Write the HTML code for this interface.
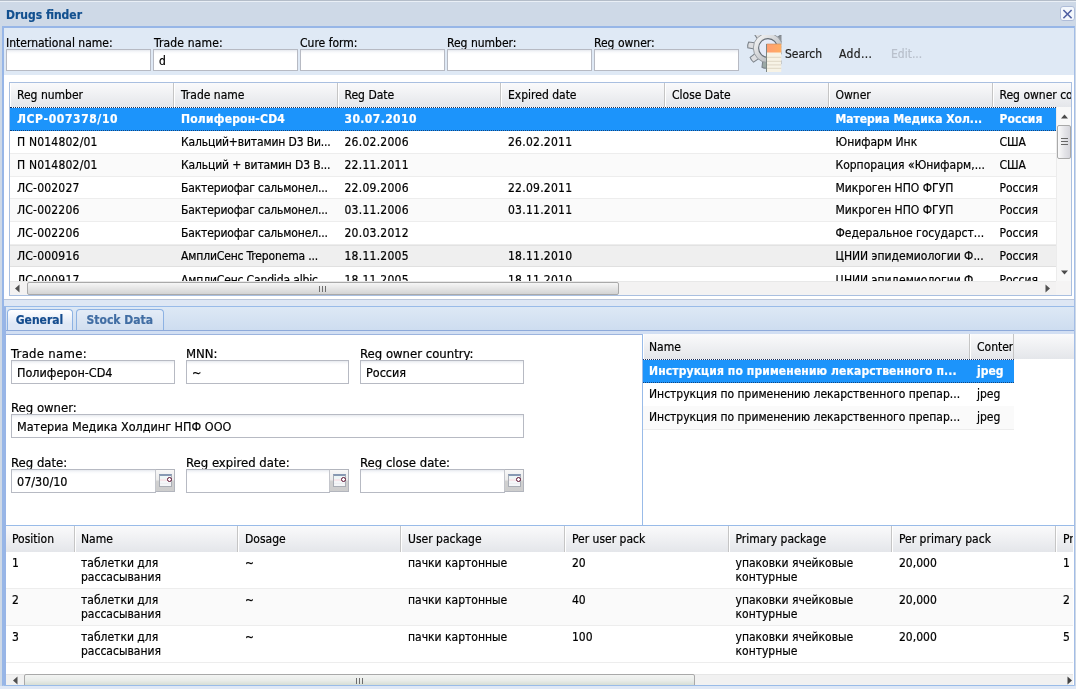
<!DOCTYPE html>
<html><head><meta charset="utf-8"><title>Drugs finder</title>
<style>
*{box-sizing:border-box;margin:0;padding:0}
html,body{width:1076px;height:689px;overflow:hidden}
body{-webkit-text-stroke:.2px;background:#ced9e7;font-family:"DejaVu Sans Condensed","DejaVu Sans","Liberation Sans",sans-serif;font-size:12px;color:#000;position:relative}
.abs{position:absolute}
.lbl{position:absolute;white-space:nowrap;line-height:14px;height:14px}
.inp{position:absolute;height:22px;border:1px solid #b7bac3;background:#fff linear-gradient(#e6e9ee 0,#f8f9fb 2px,#fff 4px);padding:0 0 0 5px;line-height:22.5px;white-space:nowrap;overflow:hidden}
.hd{position:absolute;background:linear-gradient(#fafafb,#e4e6ea);overflow:hidden}
.hc{position:absolute;top:0;height:100%;border-right:1px solid #c5c5c5;border-left:1px solid #fff;padding-left:6px;white-space:nowrap;overflow:hidden}
.row{position:absolute;left:0;border-bottom:1px solid #ededed;overflow:hidden;background:#fff}
.row.alt{background:#fafafa}
.row.hov{background:#efefef;box-shadow:inset 0 1px 0 #e2e2e2;border-bottom-color:#e0e0e0}
.row.sel{background:linear-gradient(#fff 0,#fff 1px,#1c94fb 1px) border-box;color:#fff;font-weight:bold;border-bottom:1px dotted #15457d;border-top:1px dotted #1b2f5c}
.c{position:absolute;top:0;white-space:nowrap;overflow:hidden;text-overflow:ellipsis;padding-left:7px}
.tab{text-align:center;font-weight:bold;color:#416da3;line-height:20px;border:1px solid #8db2e3;border-bottom:none;border-radius:4px 4px 0 0;background:linear-gradient(#e4ecf7,#d1deef)}
.tab.act{color:#144c8e;background:linear-gradient(#fff,#dfe8f6 70%)}
.trg{position:absolute;width:20px;height:23px;border:1px solid #b2b5bd;border-left:1px solid #c4c6cc;background:linear-gradient(#f7f7f7 0,#ececec 45%,#d0d0d0 55%,#cdcdcd)}
.trg i{position:absolute;left:3px;top:4px;width:13px;height:13px;border:1px solid #a9adb5;border-top:2px solid #8799b3;background:linear-gradient(#eef6f6 0,#eef6f6 3px,#f6e6ea 3px,#f6e6ea 5px,#f4f6f8 5px,#f4f6f8 7px,#e6e8ec 7px,#f4f6f8 8px)}
.trg i:after{content:"";position:absolute;right:-1px;top:1px;width:5px;height:5px;border:1.5px solid #5c1030;border-radius:3px;background:#fff;box-sizing:border-box}
.lbl.f{font-size:13px}
.inp.f{font-size:12.5px}
</style></head><body>
<div id="wrap" style="position:absolute;left:0;top:0;width:1076px;height:689px;overflow:hidden;will-change:transform">
<!-- window header -->
<div class="abs" style="left:0;top:0;width:1076px;height:1px;background:#b4bdc9"></div>
<div class="abs" style="left:0;top:1px;width:1076px;height:1px;background:#e9eff6"></div>
<div class="abs" id="title" style="left:6px;top:7px;font-weight:bold;color:#12508f;line-height:16px;white-space:nowrap">Drugs finder</div>
<div class="abs" id="close" style="left:1059.5px;top:5.5px;width:15px;height:15.5px;border:1px solid #aebcd8;border-radius:3px;background:#f4f8fd">
<svg width="13" height="14" viewBox="0 0 13 14" style="display:block"><path d="M2.4 3 L10.6 11.2 M10.6 3 L2.4 11.2" stroke="#4f60a3" stroke-width="1.6" fill="none"/></svg></div>
<!-- window body -->
<div class="abs" id="wbody" style="left:2px;top:26px;width:1073px;height:660px;background:#dfe9f5;border:2px solid #97b6e7;border-right:1px solid #a3bde6;border-bottom:1px solid #b4cbea"></div>
<div class="abs" style="left:0;top:686px;width:1076px;height:3px;background:#dfe8f6"></div>

<!-- top search form -->
<div class="lbl" style="left:6px;top:36px">International name:</div>
<div class="inp" style="left:6px;top:49px;width:145px"></div>
<div class="lbl" style="left:154px;top:36px;letter-spacing:.15px">Trade name:</div>
<div class="inp" style="left:153px;top:49px;width:145px">d</div>
<div class="lbl" style="left:300px;top:36px">Cure form:</div>
<div class="inp" style="left:300px;top:49px;width:145px"></div>
<div class="lbl" style="left:447px;top:36px">Reg number:</div>
<div class="inp" style="left:447px;top:49px;width:145px"></div>
<div class="lbl" style="left:594px;top:36px">Reg owner:</div>
<div class="inp" style="left:594px;top:49px;width:145px"></div>
<!-- search icon -->
<svg class="abs" id="sicon" style="left:745px;top:34px" width="37" height="38" viewBox="0 0 37 38">
<defs><linearGradient id="gg" x1="0" y1="0" x2="1" y2="1"><stop offset="0" stop-color="#f6f6f6"/><stop offset="1" stop-color="#a9aeb3"/></linearGradient>
<linearGradient id="og" x1="0" y1="0" x2="1" y2="0"><stop offset="0" stop-color="#ff9d73"/><stop offset="1" stop-color="#ffae62"/></linearGradient>
<clipPath id="cp"><rect x="1" y="1" width="35.5" height="37"/></clipPath></defs>
<g clip-path="url(#cp)">
<g transform="translate(23,14)">
<g fill="#dddee1" stroke="#7c838a" stroke-width="1.1">
<path d="M12,-3.2 L20,-2.9 Q20.9,0 20,2.9 L12,3.2z" transform="rotate(-171)"/>
<path d="M12,-3.2 L20,-2.9 Q20.9,0 20,2.9 L12,3.2z" transform="rotate(-216)"/>
<path d="M12,-3.2 L20,-2.9 Q20.9,0 20,2.9 L12,3.2z" transform="rotate(-126)"/>
<path d="M12,-3.2 L20,-2.9 Q20.9,0 20,2.9 L12,3.2z" transform="rotate(-81)"/>
<path d="M12,-3.2 L20,-2.9 Q20.9,0 20,2.9 L12,3.2z" transform="rotate(9)"/>
<path d="M12,-3.2 L20,-2.9 Q20.9,0 20,2.9 L12,3.2z" transform="rotate(54)"/>
<path d="M12,-3.2 L20,-2.9 Q20.9,0 20,2.9 L12,3.2z" transform="rotate(-261)" fill="#9ba9a5"/>
<path d="M12,-3.2 L20,-2.9 Q20.9,0 20,2.9 L12,3.2z" transform="rotate(-36)" fill="#8b9095"/>
</g>
<circle r="12.1" fill="none" stroke="url(#gg)" stroke-width="5.2"/>
<circle r="14.7" fill="none" stroke="#8f959b" stroke-width="0.9"/>
<circle r="9.4" fill="#e6ebf8" stroke="#636b72" stroke-width="1.1"/>
</g>
<rect x="21.5" y="10" width="15" height="28" fill="#f7f3e6"/>
<rect x="21.5" y="10" width="15" height="8.5" fill="url(#og)"/>
<path d="M21.5 23.3h15M21.5 27.3h15M21.5 30.8h15M21.5 34.3h15" stroke="#e3dccb" stroke-width="1.2"/>
<path d="M21.5 10v28" stroke="#7d8784" stroke-width="1"/>
<path d="M21.5 10h15" stroke="#c98a5a" stroke-width="0.6"/>
</g>
</svg>
<div class="lbl" style="left:785px;top:47px;color:#222">Search</div>
<div class="lbl" style="left:839px;top:47px;color:#222;letter-spacing:.35px">Add...</div>
<div class="lbl" style="left:891px;top:47px;color:#b9c0cc">Edit...</div>
<!-- grid 1 container -->
<div class="abs" style="left:4px;top:75px;width:1070px;height:224px;background:#fff"></div>
<div class="abs" id="g1" style="left:9px;top:82px;width:1063px;height:214px;border:1px solid #a9bfe0;background:#fff;overflow:hidden">
<div class="hd" style="left:0;top:0;width:1061px;height:24px;line-height:25px">
<div class="hc" style="left:0px;width:164px">Reg number</div>
<div class="hc" style="left:164px;width:163.5px">Trade name</div>
<div class="hc" style="left:327.5px;width:163.5px">Reg Date</div>
<div class="hc" style="left:491px;width:164px">Expired date</div>
<div class="hc" style="left:655px;width:163.5px">Close Date</div>
<div class="hc" style="left:818.5px;width:164px">Owner</div>
<div class="hc" style="left:982.5px;width:163.5px">Reg owner country</div>
</div>
<div class="abs" style="left:0;top:24px;width:1046px;height:174px;overflow:hidden">
<div class="row sel" style="top:0px;width:1046px;height:24px;line-height:22px">
<div class="c" style="left:0px;width:164px;letter-spacing:0.6px">ЛСР-007378/10</div>
<div class="c" style="left:164px;width:163.5px;letter-spacing:0.2px">Полиферон-CD4</div>
<div class="c" style="left:327.5px;width:163.5px;letter-spacing:0.4px">30.07.2010</div>
<div class="c" style="left:818.5px;width:164px">Материа Медика Хол...</div>
<div class="c" style="left:982.5px;width:163.5px;letter-spacing:0.05px">Россия</div>
</div>
<div class="row " style="top:24px;width:1046px;height:23px;line-height:22px">
<div class="c" style="left:0px;width:164px;letter-spacing:0.2px">П N014802/01</div>
<div class="c" style="left:164px;width:163.5px;letter-spacing:-0.15px">Кальций+витамин D3 Ви...</div>
<div class="c" style="left:327.5px;width:163.5px;letter-spacing:0.25px">26.02.2006</div>
<div class="c" style="left:491px;width:164px;letter-spacing:0.25px">26.02.2011</div>
<div class="c" style="left:818.5px;width:164px">Юнифарм Инк</div>
<div class="c" style="left:982.5px;width:163.5px">США</div>
</div>
<div class="row alt" style="top:47px;width:1046px;height:23px;line-height:22px">
<div class="c" style="left:0px;width:164px;letter-spacing:0.2px">П N014802/01</div>
<div class="c" style="left:164px;width:163.5px;letter-spacing:-0.15px">Кальций + витамин D3 В...</div>
<div class="c" style="left:327.5px;width:163.5px;letter-spacing:0.25px">22.11.2011</div>
<div class="c" style="left:818.5px;width:164px">Корпорация «Юнифарм,...</div>
<div class="c" style="left:982.5px;width:163.5px">США</div>
</div>
<div class="row " style="top:70px;width:1046px;height:22px;line-height:22px">
<div class="c" style="left:0px;width:164px;letter-spacing:0.2px">ЛС-002027</div>
<div class="c" style="left:164px;width:163.5px;letter-spacing:-0.15px">Бактериофаг сальмонел...</div>
<div class="c" style="left:327.5px;width:163.5px;letter-spacing:0.25px">22.09.2006</div>
<div class="c" style="left:491px;width:164px;letter-spacing:0.25px">22.09.2011</div>
<div class="c" style="left:818.5px;width:164px">Микроген НПО ФГУП</div>
<div class="c" style="left:982.5px;width:163.5px">Россия</div>
</div>
<div class="row alt" style="top:92px;width:1046px;height:23px;line-height:22px">
<div class="c" style="left:0px;width:164px;letter-spacing:0.2px">ЛС-002206</div>
<div class="c" style="left:164px;width:163.5px;letter-spacing:-0.15px">Бактериофаг сальмонел...</div>
<div class="c" style="left:327.5px;width:163.5px;letter-spacing:0.25px">03.11.2006</div>
<div class="c" style="left:491px;width:164px;letter-spacing:0.25px">03.11.2011</div>
<div class="c" style="left:818.5px;width:164px">Микроген НПО ФГУП</div>
<div class="c" style="left:982.5px;width:163.5px">Россия</div>
</div>
<div class="row " style="top:115px;width:1046px;height:23px;line-height:22px">
<div class="c" style="left:0px;width:164px;letter-spacing:0.2px">ЛС-002206</div>
<div class="c" style="left:164px;width:163.5px;letter-spacing:-0.15px">Бактериофаг сальмонел...</div>
<div class="c" style="left:327.5px;width:163.5px;letter-spacing:0.25px">20.03.2012</div>
<div class="c" style="left:818.5px;width:164px">Федеральное государст...</div>
<div class="c" style="left:982.5px;width:163.5px">Россия</div>
</div>
<div class="row hov" style="top:138px;width:1046px;height:22px;line-height:22px">
<div class="c" style="left:0px;width:164px;letter-spacing:0.2px">ЛС-000916</div>
<div class="c" style="left:164px;width:163.5px;letter-spacing:-0.15px">АмплиСенс Treponema ...</div>
<div class="c" style="left:327.5px;width:163.5px;letter-spacing:0.25px">18.11.2005</div>
<div class="c" style="left:491px;width:164px;letter-spacing:0.25px">18.11.2010</div>
<div class="c" style="left:818.5px;width:164px">ЦНИИ эпидемиологии Ф...</div>
<div class="c" style="left:982.5px;width:163.5px">Россия</div>
</div>
<div class="row " style="top:160px;width:1046px;height:23px;line-height:26px">
<div class="c" style="left:0px;width:164px;letter-spacing:0.2px">ЛС-000917</div>
<div class="c" style="left:164px;width:163.5px;letter-spacing:-0.15px">АмплиСенс Candida albic...</div>
<div class="c" style="left:327.5px;width:163.5px;letter-spacing:0.25px">18.11.2005</div>
<div class="c" style="left:491px;width:164px;letter-spacing:0.25px">18.11.2010</div>
<div class="c" style="left:818.5px;width:164px">ЦНИИ эпидемиологии Ф...</div>
<div class="c" style="left:982.5px;width:163.5px">Россия</div>
</div>
</div>
<div class="abs" style="left:1046px;top:24px;width:15px;height:174px;background:#f8f8f8;border-left:1px solid #ececec">
<svg class="abs" style="left:3px;top:6px" width="9" height="6" viewBox="0 0 9 6"><path d="M1 5.5L4.5 1.5L8 5.5z" fill="#4a4a4a"/></svg>
<div class="abs" style="left:0px;top:18px;width:14px;height:34px;border:1px solid #a9a9a9;border-radius:2px;background:linear-gradient(90deg,#fbfbfb,#e4e4e8 55%,#d6d6dc)"><div class="abs" style="left:3px;top:12px;width:7px;height:8px;background:repeating-linear-gradient(#666 0,#666 1.4px,transparent 1.4px,transparent 3px)"></div></div>
<svg class="abs" style="left:3px;top:163px" width="9" height="6" viewBox="0 0 9 6"><path d="M1 0.5L4.5 4.5L8 0.5z" fill="#4a4a4a"/></svg>
</div>
<div class="abs" style="left:0;top:198px;width:1046px;height:14px;background:#f3f2f2;border-top:1px solid #e8e8e8">
<svg class="abs" style="left:4px;top:2px" width="6" height="9" viewBox="0 0 6 9"><path d="M5.5 0.5L1 4.5L5.5 8.5z" fill="#505050"/></svg>
<div class="abs" style="left:17px;top:0;width:592px;height:13px;border:1px solid #a9a9a9;border-radius:2px;background:linear-gradient(#f6f6f6,#d4d4d4)"><div class="abs" style="left:291px;top:3px;width:8px;height:6px;background:repeating-linear-gradient(90deg,#6d6d6d 0,#6d6d6d 1px,transparent 1px,transparent 3px)"></div></div>
<svg class="abs" style="left:1035px;top:2px" width="6" height="9" viewBox="0 0 6 9"><path d="M0.5 0.5L5 4.5L0.5 8.5z" fill="#505050"/></svg>
</div>
<div class="abs" style="left:1046px;top:198px;width:15px;height:14px;background:#f5f4f4"></div>
</div>

<!-- tab panel -->
<div class="abs" style="left:4px;top:299px;width:1070px;height:7px;background:#dee7f4;border-top:1px solid #bac6da"></div>
<div class="abs" id="tabbar" style="left:4px;top:306px;width:1070px;height:28px;background:linear-gradient(#dde8f5,#cbdbef);border-top:1px solid #99bbe8"></div>
<div class="abs" style="left:4px;top:330px;width:1070px;height:4.5px;background:#d2dff3;border-top:1px solid #8eaada;border-bottom:1.5px solid #9cb4de"></div>
<div class="abs tab act" style="left:6.5px;top:308.5px;width:66px;height:21.5px">General</div>
<div class="abs tab" style="left:75.5px;top:308.5px;width:88.5px;height:21.5px">Stock Data</div>
<!-- general form -->
<div class="abs" style="left:5.6px;top:334.5px;width:636.4px;height:191.5px;background:#fff"></div>
<div class="lbl f" style="left:11px;top:347px;letter-spacing:.3px">Trade name:</div>
<div class="inp f" style="left:11px;top:360px;width:164px;height:23.5px;line-height:23px">Полиферон-CD4</div>
<div class="lbl f" style="left:186px;top:347px">MNN:</div>
<div class="inp f" style="left:186px;top:360px;width:163px;height:23.5px;line-height:23px">~</div>
<div class="lbl f" style="left:360px;top:347px">Reg owner country:</div>
<div class="inp f" style="left:360px;top:360px;width:164px;height:23.5px;line-height:23px">Россия</div>
<div class="lbl f" style="left:11px;top:401px">Reg owner:</div>
<div class="inp f" style="left:11px;top:414px;width:513px;height:23.5px;line-height:23px">Материа Медика Холдинг НПФ ООО</div>
<div class="lbl f" style="left:11px;top:456px">Reg date:</div>
<div class="inp f" style="left:11px;top:469px;width:145px;height:23.5px;line-height:23px">07/30/10</div>
<div class="trg" style="left:155px;top:469px"><i></i></div>
<div class="lbl f" style="left:186px;top:456px">Reg expired date:</div>
<div class="inp f" style="left:186px;top:469px;width:144px;height:23.5px;line-height:23px"></div>
<div class="trg" style="left:329px;top:469px;width:19.5px"><i></i></div>
<div class="lbl f" style="left:360px;top:456px">Reg close date:</div>
<div class="inp f" style="left:360px;top:469px;width:145px;height:23.5px;line-height:23px"></div>
<div class="trg" style="left:504px;top:469px"><i></i></div>

<!-- documents grid -->
<div class="abs" id="g2" style="left:642px;top:334px;width:432px;height:192px;background:#fff;border-left:1px solid #99bbe8;overflow:hidden">
<div class="hd" style="left:0;top:0;width:432px;height:25px;line-height:26px">
<div class="hc" style="left:0;width:327px;padding-left:5px">Name</div>
<div class="hc" style="left:327px;width:44px">Content type</div>
</div>
<div class="row sel" style="top:25px;width:371px;height:24px;line-height:23px"><div class="c" style="left:-1px;width:328px;letter-spacing:.12px">Инструкция по применению лекарственного п...</div><div class="c" style="left:327px;width:44px">jpeg</div></div>
<div class="row" style="top:49px;width:371px;height:23.5px;line-height:23px"><div class="c" style="left:-1px;width:328px">Инструкция по применению лекарственного препар...</div><div class="c" style="left:327px;width:44px">jpeg</div></div>
<div class="row alt" style="top:72px;width:371px;height:23.5px;line-height:23px"><div class="c" style="left:-1px;width:328px">Инструкция по применению лекарственного препар...</div><div class="c" style="left:327px;width:44px">jpeg</div></div>
</div>

<!-- packages grid -->
<div class="abs" id="g3" style="left:4px;top:525px;width:1070px;height:161px;background:#fff;border-top:1px solid #99bbe8;border-bottom:1px solid #99bbe8;overflow:hidden">
<div class="hd" style="left:0;top:0;width:1069px;height:26px;line-height:26px">
<div class="hc" style="left:1px;width:70px">Position</div>
<div class="hc" style="left:71px;width:163px;padding-left:5px">Name</div>
<div class="hc" style="left:234px;width:163px">Dosage</div>
<div class="hc" style="left:397px;width:164px">User package</div>
<div class="hc" style="left:561px;width:163.5px">Per user pack</div>
<div class="hc" style="left:724.5px;width:163.5px">Primary package</div>
<div class="hc" style="left:888px;width:164px">Per primary pack</div>
<div class="hc" style="left:1052px;width:164px">Primary packs</div>
</div>
<div class="row" style="top:26px;width:1069px;height:37px;line-height:14px">
<div class="c" style="left:1px;width:70px;top:4px;white-space:normal">1</div>
<div class="c" style="left:70px;width:163px;top:4px;white-space:normal">таблетки для<br>рассасывания</div>
<div class="c" style="left:234px;width:163px;top:4px;white-space:normal">~</div>
<div class="c" style="left:397px;width:164px;top:4px;white-space:normal">пачки картонные</div>
<div class="c" style="left:561px;width:163.5px;top:4px;white-space:normal">20</div>
<div class="c" style="left:724.5px;width:163.5px;top:4px;white-space:normal">упаковки ячейковые<br>контурные</div>
<div class="c" style="left:888px;width:164px;top:4px;white-space:normal">20,000</div>
<div class="c" style="left:1052px;width:164px;top:4px;white-space:normal">1</div>
</div>
<div class="row alt" style="top:63px;width:1069px;height:37px;line-height:14px">
<div class="c" style="left:1px;width:70px;top:4px;white-space:normal">2</div>
<div class="c" style="left:70px;width:163px;top:4px;white-space:normal">таблетки для<br>рассасывания</div>
<div class="c" style="left:234px;width:163px;top:4px;white-space:normal">~</div>
<div class="c" style="left:397px;width:164px;top:4px;white-space:normal">пачки картонные</div>
<div class="c" style="left:561px;width:163.5px;top:4px;white-space:normal">40</div>
<div class="c" style="left:724.5px;width:163.5px;top:4px;white-space:normal">упаковки ячейковые<br>контурные</div>
<div class="c" style="left:888px;width:164px;top:4px;white-space:normal">20,000</div>
<div class="c" style="left:1052px;width:164px;top:4px;white-space:normal">2</div>
</div>
<div class="row" style="top:100px;width:1069px;height:37px;line-height:14px">
<div class="c" style="left:1px;width:70px;top:4px;white-space:normal">3</div>
<div class="c" style="left:70px;width:163px;top:4px;white-space:normal">таблетки для<br>рассасывания</div>
<div class="c" style="left:234px;width:163px;top:4px;white-space:normal">~</div>
<div class="c" style="left:397px;width:164px;top:4px;white-space:normal">пачки картонные</div>
<div class="c" style="left:561px;width:163.5px;top:4px;white-space:normal">100</div>
<div class="c" style="left:724.5px;width:163.5px;top:4px;white-space:normal">упаковки ячейковые<br>контурные</div>
<div class="c" style="left:888px;width:164px;top:4px;white-space:normal">20,000</div>
<div class="c" style="left:1052px;width:164px;top:4px;white-space:normal">5</div>
</div>
<div class="abs" style="left:0;top:148px;width:1069px;height:12px;background:#f1f1f1;border-top:1px solid #e6e6e6">
<svg class="abs" style="left:8px;top:1px" width="6" height="9" viewBox="0 0 6 9"><path d="M5.5 0.5L1 4.5L5.5 8.5z" fill="#505050"/></svg>
<div class="abs" style="left:20px;top:-1px;width:671px;height:13px;border:1px solid #a9a9a9;border-radius:2px;background:linear-gradient(#f3f4f3,#e9ece9 50%,#d3dbd1)"><div class="abs" style="left:331px;top:3px;width:8px;height:6px;background:repeating-linear-gradient(90deg,#6d6d6d 0,#6d6d6d 1px,transparent 1px,transparent 3px)"></div></div>
<svg class="abs" style="left:1063px;top:1px" width="6" height="9" viewBox="0 0 6 9"><path d="M0.5 0.5L5 4.5L0.5 8.5z" fill="#404040"/></svg>
</div>
</div>
<div class="abs" style="left:4px;top:307px;width:1.9px;height:378px;background:#98b5e6"></div>
</div>
</body></html>
